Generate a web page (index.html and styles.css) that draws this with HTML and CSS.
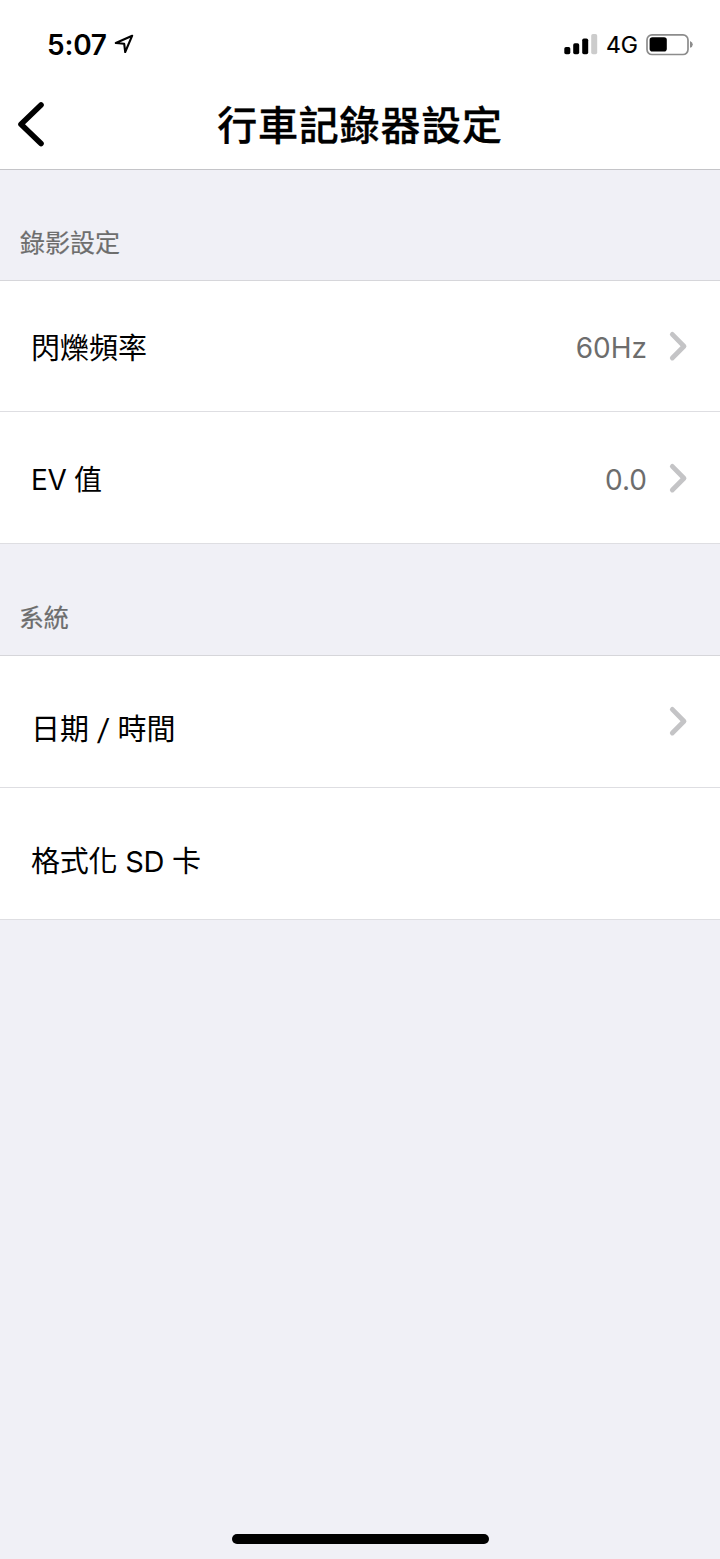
FILE: index.html
```html
<!DOCTYPE html>
<html lang="zh-Hant">
<head>
<meta charset="utf-8">
<title>行車記錄器設定</title>
<link rel="stylesheet" href="styles.css">
</head>
<body>
<div class="screen">
  <header class="top">
    <div class="status">
      <div class="status-left">
        <span class="time">5:07</span>
        <svg class="location" width="20" height="20" viewBox="0 0 20 20"><path d="M18.2 1.7 L1.8 9 L10.2 9.8 L11.2 18 Z" fill="none" stroke="#000" stroke-width="2.1" stroke-linejoin="round"/></svg>
      </div>
      <div class="status-right">
        <svg width="34" height="22" viewBox="0 0 34 22"><rect x=".3" y="13" width="6" height="7.2" rx="1.7"/><rect x="9.2" y="9.2" width="6" height="11" rx="1.7"/><rect x="18.2" y="4.6" width="6" height="15.6" rx="1.7"/><rect x="27.2" y="0" width="6" height="20.2" rx="1.7" fill="#ccc"/></svg>
        <span class="network">4G</span>
        <svg class="battery" width="48" height="22" viewBox="0 0 48 22"><rect x="1" y="0.9" width="41" height="19.6" rx="5" fill="none" stroke="#8c8c8c" stroke-width="1.7"/><rect x="3.6" y="3.2" width="17.2" height="14.4" rx="2.8"/><path d="M44 7 Q46.8 8.1 46.8 10.4 Q46.8 12.7 44 13.8 Z" fill="#8c8c8c"/></svg>
      </div>
    </div>
    <div class="nav">
      <svg class="back" width="30" height="48" viewBox="0 0 30 48"><path d="M25 4 L5 23.2 L25 42.5" fill="none" stroke="#000" stroke-width="5.6" stroke-linecap="round" stroke-linejoin="round"/></svg>
      <h1 class="title">行車記錄器設定</h1>
    </div>
  </header>
  <main class="content">
    <h2 class="section">錄影設定</h2>
    <div class="row"><span class="label">閃爍頻率</span><span class="value">60Hz</span><svg class="chevron" width="20" height="32" viewBox="0 0 20 32"><path d="M4.3 4.4 L16 16.2 L4.3 28"/></svg></div>
    <div class="row row-last"><span class="label label-ev">EV 值</span><span class="value">0.0</span><svg class="chevron" width="20" height="32" viewBox="0 0 20 32"><path d="M4.3 4.4 L16 16.2 L4.3 28"/></svg></div>
    <h2 class="section section-system">系統</h2>
    <div class="row row-date"><span class="label label-date">日期<span class="slash">/</span>時間</span><svg class="chevron" width="20" height="32" viewBox="0 0 20 32"><path d="M4.3 3.4 L16 15.2 L4.3 27"/></svg></div>
    <div class="row row-last"><span class="label label-format">格式化 SD 卡</span></div>
  </main>
  <footer class="home"><div class="home-bar"></div></footer>
</div>
</body>
</html>
```
FILE: styles.css
```css
* { box-sizing: border-box; }
body {
  margin: 0;
  background: #f0f0f6;
  color: #000;
  font-family: Inter, "Noto Sans CJK TC", sans-serif;
}
.screen { display: flex; flex-direction: column; width: 720px; height: 1559px; }
.top { height: 170px; background: #fff; border-bottom: 1px solid #c4c4c8; }
.status { display: flex; justify-content: space-between; height: 80px; padding: 34px 26px 0 47px; }
.status-left, .status-right { display: flex; align-items: flex-start; }
.time { font-size: 28px; font-weight: 600; line-height: 22px; letter-spacing: -0.2px; width: 67px; }
.network { width: 48px; padding-left: 8px; font-size: 23px; line-height: 23px; font-weight: 400; -webkit-text-stroke: 0.2px #000; letter-spacing: -0.1px; white-space: nowrap; }
.nav { display: grid; grid-template-columns: 64px 1fr 64px; height: 89px; align-items: center; }
.back { margin-left: 16px; }
.title { margin: 0; padding-top: 3px; text-align: center; font-size: 40px; line-height: 60px; font-weight: 500; -webkit-text-stroke: 0.3px #000; letter-spacing: 0.8px; white-space: nowrap; }
.content { flex: 1; }
.section { margin: 0; height: 111px; padding: 55px 20px 0; border-bottom: 1px solid #d6d6da; color: #6d6d6d; font-size: 25px; line-height: 36px; font-weight: 400; -webkit-text-stroke: 0.2px #6d6d6d; }
.section-system { height: 112px; padding-top: 56px; padding-left: 19px; letter-spacing: -0.3px; }
.row { display: flex; align-items: center; height: 131px; padding: 0 32px 0 31px; background: #fff; border-bottom: 1px solid #dedee2; }
.row-last, .row-date { height: 132px; }
.label { flex: 1; padding-top: 5px; font-size: 29px; line-height: 42px; font-weight: 400; }
.value { margin-right: 21px; padding-top: 4px; color: #6d6d6d; font-size: 28px; line-height: 42px; letter-spacing: 0; }
.label-ev { font-size: 28px; letter-spacing: -0.3px; }
.label-date { padding-top: 17px; }
.slash { display: inline-block; padding: 0 9px; transform: skewX(-7deg); }
.label-format { padding-top: 17px; letter-spacing: -0.25px; }
.chevron { fill: none; stroke: #c4c4c6; stroke-width: 4.8; stroke-linecap: round; stroke-linejoin: round; }
.home { display: flex; justify-content: center; height: 25px; padding-left: 1px; }
.home-bar { width: 257px; height: 10px; border-radius: 5px; background: #000; }
```
